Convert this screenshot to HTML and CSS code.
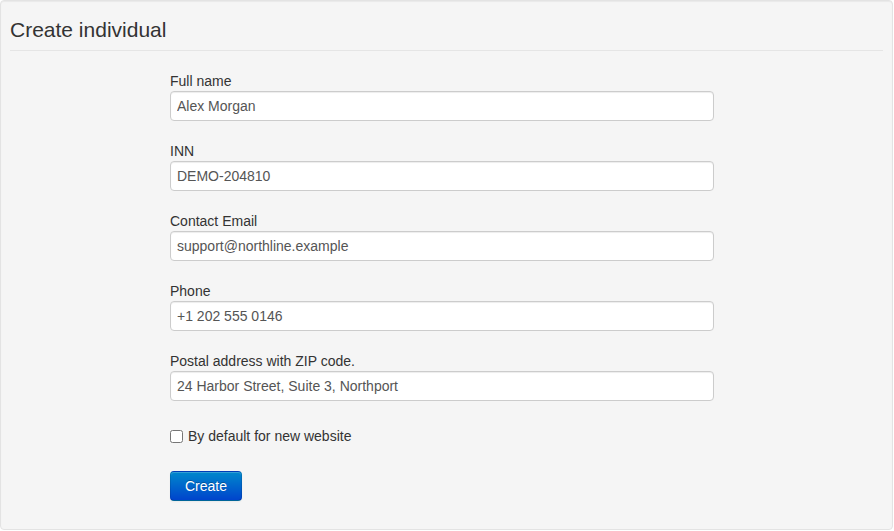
FILE: index.html
```html
<!DOCTYPE html>
<html>
<head>
<meta charset="utf-8">
<link rel="stylesheet" href="styles.css">
</head>
<body>
<div class="well">
  <h1 class="legend">Create individual</h1>
  <form class="form">
    <div class="field">
      <label class="label">Full name</label>
      <input class="input" type="text" value="Alex Morgan">
    </div>
    <div class="field">
      <label class="label">INN</label>
      <input class="input" type="text" value="DEMO-204810">
    </div>
    <div class="field">
      <label class="label">Contact Email</label>
      <input class="input" type="text" value="support@northline.example">
    </div>
    <div class="field">
      <label class="label">Phone</label>
      <input class="input" type="text" value="+1 202 555 0146">
    </div>
    <div class="field">
      <label class="label">Postal address with ZIP code.</label>
      <input class="input" type="text" value="24 Harbor Street, Suite 3, Northport">
    </div>
    <label class="checkbox"><input class="check" type="checkbox"><span>By default for new website</span></label>
    <div class="actions">
      <button class="btn" type="button">Create</button>
    </div>
  </form>
</div>
</body>
</html>
```

FILE: styles.css
```css
html, body {
  margin: 0;
  padding: 0;
  background: #ffffff;
}
body {
  font-family: "Liberation Sans", Arial, sans-serif;
  font-size: 14px;
  line-height: 20px;
  color: #333333;
}
.well {
  box-sizing: border-box;
  width: 893px;
  height: 530px;
  padding: 9px;
  background: #f5f5f5;
  border: 1px solid #e3e3e3;
  border-radius: 4px;
  box-shadow: inset 0 1px 1px rgba(0, 0, 0, 0.05);
}
.legend {
  margin: 0 0 20px 0;
  font-size: 21px;
  font-weight: normal;
  line-height: 40px;
  color: #333333;
  border-bottom: 1px solid #e5e5e5;
}
.form {
  margin: 0 0 0 160px;
  width: 544px;
  display: flex;
  flex-direction: column;
}
.field {
  display: flex;
  flex-direction: column;
  margin-bottom: 20px;
}
.label {
  display: block;
  line-height: 20px;
  color: #333333;
}
.input {
  box-sizing: border-box;
  height: 30px;
  width: 544px;
  margin: 0;
  padding: 4px 6px;
  font-family: "Liberation Sans", Arial, sans-serif;
  font-size: 14px;
  line-height: 20px;
  color: #555555;
  background: #ffffff;
  border: 1px solid #cccccc;
  border-radius: 4px;
  box-shadow: inset 0 1px 1px rgba(0, 0, 0, 0.075);
  outline: none;
}
.checkbox {
  display: flex;
  align-items: center;
  gap: 5px;
  height: 20px;
  margin-top: 5px;
  color: #333333;
}
.check {
  width: 13px;
  height: 13px;
  margin: 0;
}
.actions {
  margin-top: 25px;
}
.btn {
  box-sizing: border-box;
  height: 30px;
  width: 72px;
  padding: 4px 14px;
  font-family: "Liberation Sans", Arial, sans-serif;
  font-size: 14px;
  line-height: 20px;
  color: #ffffff;
  text-shadow: 0 -1px 0 rgba(0, 0, 0, 0.25);
  background: linear-gradient(to bottom, #0088cc, #0044cc);
  border: 1px solid #0044cc;
  border-color: rgba(0, 0, 0, 0.1) rgba(0, 0, 0, 0.1) rgba(0, 0, 0, 0.25);
  border-radius: 4px;
  box-shadow: inset 0 1px 0 rgba(255, 255, 255, 0.2), 0 1px 2px rgba(0, 0, 0, 0.05);
  cursor: pointer;
}
```
